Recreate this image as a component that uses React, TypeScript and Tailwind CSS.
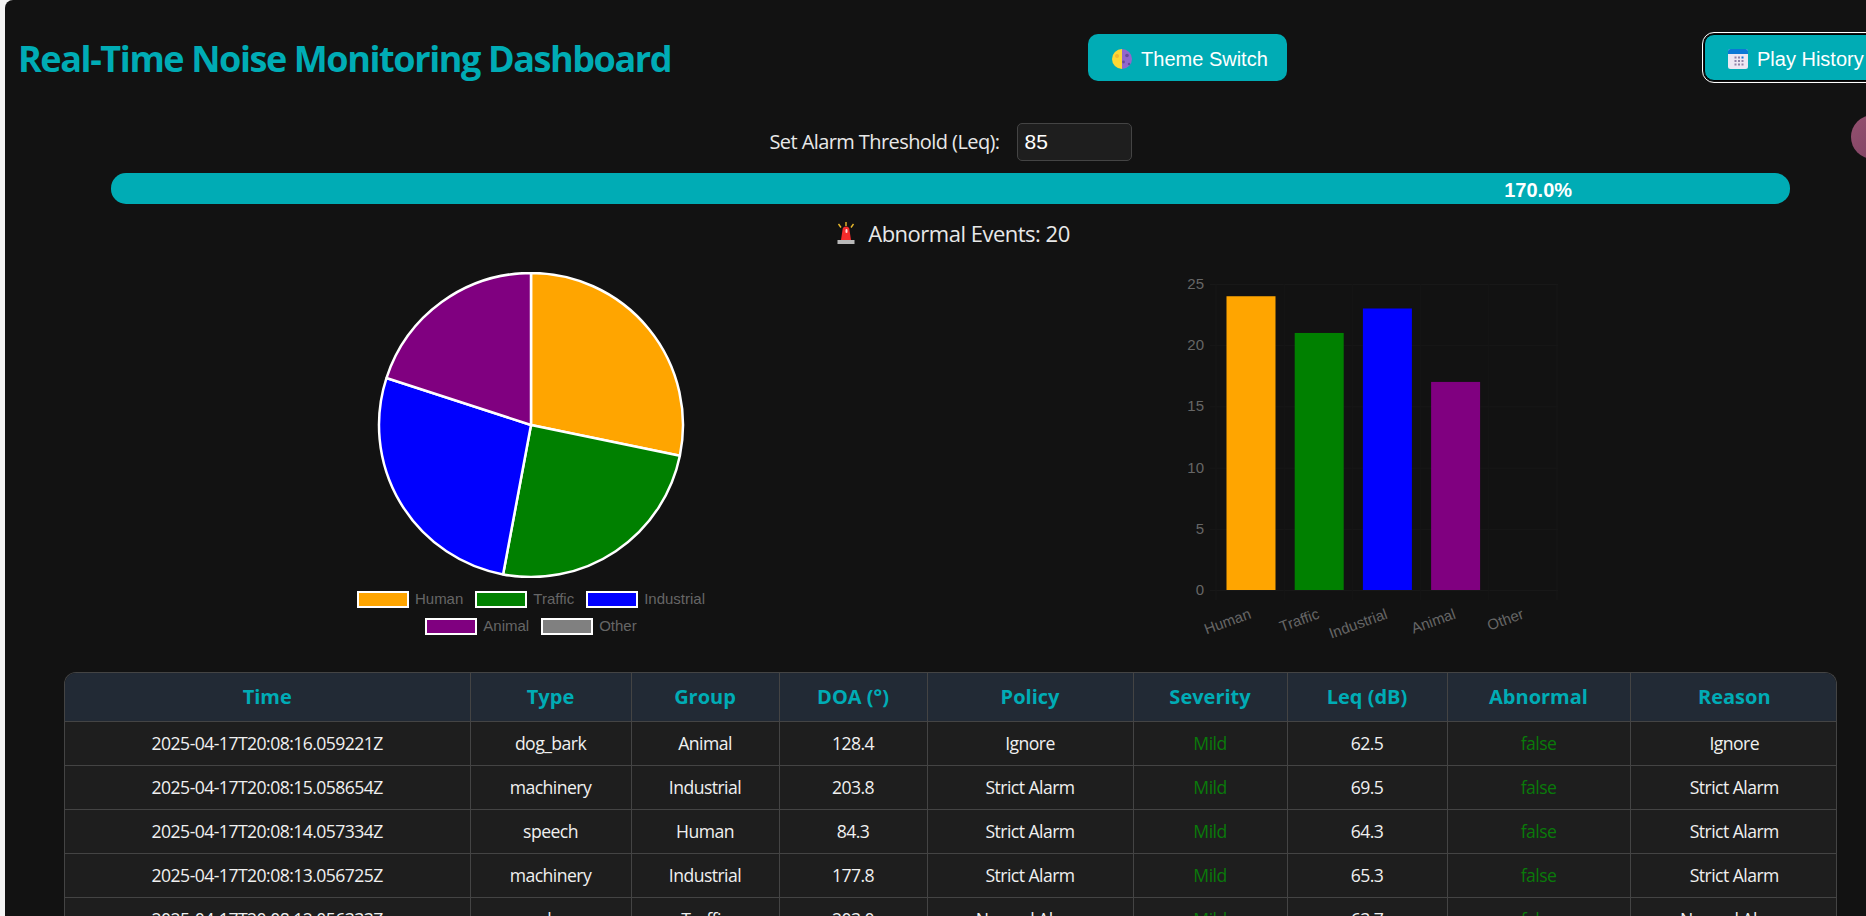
const rows = [
  ["2025-04-17T20:08:16.059221Z", "dog_bark", "Animal", "128.4", "Ignore", "Mild", "62.5", "false", "Ignore"],
  ["2025-04-17T20:08:15.058654Z", "machinery", "Industrial", "203.8", "Strict Alarm", "Mild", "69.5", "false", "Strict Alarm"],
  ["2025-04-17T20:08:14.057334Z", "speech", "Human", "84.3", "Strict Alarm", "Mild", "64.3", "false", "Strict Alarm"],
  ["2025-04-17T20:08:13.056725Z", "machinery", "Industrial", "177.8", "Strict Alarm", "Mild", "65.3", "false", "Strict Alarm"],
  ["2025-04-17T20:08:12.056333Z", "car_horn", "Traffic", "203.0", "Normal Alarm", "Mild", "63.7", "false", "Normal Alarm"],
];
const heads = ["Time", "Type", "Group", "DOA (°)", "Policy", "Severity", "Leq (dB)", "Abnormal", "Reason"];
const widths = ["w-[405px]", "w-[161px]", "w-[148px]", "w-[148px]", "w-[206px]", "w-[154px]", "w-[160px]", "w-[183px]", "w-[208px]"];

function MoonIcon() {
  return (
    <svg width="20" height="20" viewBox="0 0 20 20">
      <path d="M10 0a10 10 0 0 0 0 20z" fill="#fdd835" />
      <path d="M10 0a10 10 0 0 1 0 20z" fill="#9266cc" />
      <circle cx="5" cy="7" r="2" fill="#f5b82e" />
      <circle cx="15" cy="6.5" r="1.8" fill="#674a99" />
      <circle cx="11.5" cy="13" r="1.4" fill="#674a99" />
      <circle cx="17" cy="15" r="1.2" fill="#674a99" />
    </svg>
  );
}

function CalendarIcon() {
  return (
    <svg width="20" height="20" viewBox="0 0 20 20">
      <rect x="0" y="0" width="20" height="20" rx="2.5" fill="#ece7f3" />
      <path d="M0 5V2.5A2.5 2.5 0 0 1 2.5 0h15A2.5 2.5 0 0 1 20 2.5V5z" fill="#0a78d6" />
      {[6.5, 10, 13.5].map((x) =>
        [7.5, 11, 14.5].map((y) => (
          <rect key={`${x}-${y}`} x={x} y={y} width="2" height="2" fill={x === 13.5 && y === 7.5 ? "#0a78d6" : "#8f84a8"} />
        ))
      )}
    </svg>
  );
}

function SirenIcon() {
  return (
    <svg width="20" height="22" viewBox="0 0 20 22">
      <path d="M10 0v4M2.5 2l2.5 3.5M17.5 2L15 5.5" stroke="#e8b92c" strokeWidth="1.4" fill="none" />
      <path d="M5 18L6.5 8a3.5 3.5 0 0 1 7 0L15 18z" fill="#f52c2c" />
      <rect x="9.5" y="7" width="2" height="4" rx="1" fill="#ffd9d9" />
      <rect x="1.5" y="18" width="17" height="4" fill="#b9b9b9" />
    </svg>
  );
}

function polar(cx: number, cy: number, r: number, a: number) {
  return [cx + r * Math.sin(a), cy - r * Math.cos(a)];
}

function Pie() {
  const data = [["orange", 24], ["green", 21], ["blue", 23], ["purple", 17]] as const;
  const total = 85;
  let a = 0;
  const cx = 191, cy = 153, r = 152;
  return (
    <svg width="382" height="306" viewBox="0 0 382 306" className="block">
      {data.map(([c, v]) => {
        const s = a;
        const e = a + (v / total) * Math.PI * 2;
        a = e;
        const [x1, y1] = polar(cx, cy, r, s);
        const [x2, y2] = polar(cx, cy, r, e);
        return (
          <path key={c} d={`M${cx} ${cy}L${x1} ${y1}A${r} ${r} 0 0 1 ${x2} ${y2}Z`} fill={c} stroke="#fff" strokeWidth="2.5" strokeLinejoin="bevel" />
        );
      })}
    </svg>
  );
}

function LegendItem({ color, label }: { color: string; label: string }) {
  return (
    <div className="flex items-center gap-[6px]">
      <span className="block w-[52px] h-[17px] border-2 border-white" style={{ backgroundColor: color }} />
      <span>{label}</span>
    </div>
  );
}

function Bars() {
  const labels = ["Human", "Traffic", "Industrial", "Animal", "Other"];
  const vals = [24, 21, 23, 17];
  const colors = ["orange", "green", "blue", "purple"];
  const x0 = 56.5, y0 = 330, unit = 12.24, step = 68.2;
  const yTop = y0 - 25 * unit;
  return (
    <svg width="420" height="390" viewBox="0 0 420 390" className="block" fontFamily="'Liberation Sans', Arial, sans-serif" fontSize="15" fill="#666">
      {[0, 5, 10, 15, 20, 25].map((t) => {
        const y = y0 - t * unit;
        return (
          <g key={t}>
            <line x1={50} x2={398} y1={y + 0.5} y2={y + 0.5} stroke="#181818" />
            <text x={44} y={y + 5} textAnchor="end">{t}</text>
          </g>
        );
      })}
      {[0, 1, 2, 3, 4, 5].map((i) => (
        <line key={i} x1={x0 + i * step - 0.5} x2={x0 + i * step - 0.5} y1={yTop} y2={y0 + 10} stroke="#161616" />
      ))}
      {vals.map((v, i) => (
        <rect key={i} x={66.5 + i * 68.2} y={y0 - v * unit} width={49} height={v * unit} fill={colors[i]} />
      ))}
      {labels.map((l, i) => (
        <text key={l} transform={`translate(${92 + i * 68.2} 358) rotate(-20)`} textAnchor="end">{l}</text>
      ))}
    </svg>
  );
}

export default function App() {
  return (
    <div className="relative w-[1866px] h-[916px] overflow-hidden bg-[#f4f4f4]">
      <div className="ml-[5px] w-[1891px] h-[916px] rounded-tl-[8px] bg-[#121212] text-white overflow-hidden font-['Open_Sans','Noto_Sans',sans-serif]">
        <div className="flex items-center justify-between w-[1899px] h-[60px] mt-[27px] pl-[13px]">
          <h1 className="pt-[4px] text-[36px] leading-[44px] font-bold text-[#00acb5] whitespace-nowrap tracking-[-1.4px]">Real-Time Noise Monitoring Dashboard</h1>
          <button className="flex items-center gap-[9px] pl-[24px] pt-[3px] w-[199px] h-[47px] rounded-[10px] bg-[#00acb5] text-[20px] font-['Liberation_Sans',Arial,sans-serif]">
            <MoonIcon />
            <span>Theme Switch</span>
          </button>
          <button className="flex items-center gap-[9px] pl-[23px] pt-[3px] w-[200px] h-[47px] rounded-[10px] bg-[#00acb5] text-[20px] font-['Liberation_Sans',Arial,sans-serif] border border-black outline-1 outline-offset-1 outline-white">
            <CalendarIcon />
            <span>Play History</span>
          </button>
        </div>

        <div className="flex items-center justify-center gap-[17px] mt-[36px] h-[38px]">
          <label className="text-[20px] text-[#e8e8e8] tracking-[-0.58px]">Set Alarm Threshold (Leq):</label>
          <div className="w-[115px] h-[38px] rounded-[5px] border border-[#444] bg-[#1e1e1e] flex items-center px-[7px] text-[21px] font-['Liberation_Sans',Arial,sans-serif]">85</div>
        </div>

        <div className="ml-[106px] mt-[12px] w-[1679px] h-[31px] rounded-[15px] bg-[#00acb5] overflow-hidden">
          <div className="w-[170%] h-full pt-[2px] flex items-center justify-center text-[20px] font-bold font-['Liberation_Sans',Arial,sans-serif]">170.0%</div>
        </div>

        <div className="flex items-center justify-center gap-[12px] mt-[14px] h-[30px] pl-[5px] text-[22px] text-[#e8e8e8] tracking-[-0.5px]">
          <SirenIcon />
          <span>Abnormal Events: 20</span>
        </div>

        <div className="flex mt-[24px] h-[400px]">
          <div className="ml-[176px] w-[700px] flex flex-col items-center font-['Liberation_Sans',Arial,sans-serif] text-[15px] text-[#666]">
            <Pie />
            <div className="flex justify-center gap-[12px] mt-[13px] h-[17px] items-center">
              <LegendItem color="orange" label="Human" />
              <LegendItem color="green" label="Traffic" />
              <LegendItem color="blue" label="Industrial" />
            </div>
            <div className="flex justify-center gap-[12px] mt-[10px] h-[17px] items-center">
              <LegendItem color="purple" label="Animal" />
              <LegendItem color="gray" label="Other" />
            </div>
          </div>
          <div className="ml-[279px] -mt-[12px]">
            <Bars />
          </div>
        </div>

        <div className="ml-[59px] w-[1773px] rounded-t-[12px] overflow-hidden border border-[#444] border-b-0">
          <table className="w-full border-collapse table-fixed text-[17.6px] tracking-[-0.55px]">
            <thead>
              <tr className="h-[48px] bg-[#222a35]">
                {heads.map((h, i) => (
                  <th key={h} className={`${widths[i]} border-l first:border-l-0 border-b border-[#444] text-center text-[#00acb5] font-bold text-[20px] tracking-[0px] p-0 pt-[1px]`}>{h}</th>
                ))}
              </tr>
            </thead>
            <tbody>
              {rows.map((r) => (
                <tr key={r[0]} className="h-[44px] bg-[#1e1e1e]">
                  {r.map((c, i) => (
                    <td key={i} className={`border-l first:border-l-0 border-b border-[#444] text-center p-0 pt-[1px] whitespace-nowrap ${i === 5 || i === 7 ? "text-[#0a7a0a]" : "text-[#f0f0f0]"}`}>{c}</td>
                  ))}
                </tr>
              ))}
            </tbody>
          </table>
        </div>
      </div>
      <div className="absolute left-[1851px] top-[115px] w-[44px] h-[44px] rounded-full bg-gradient-to-br from-[#94506f] to-[#7c4262]" />
    </div>
  );
}
